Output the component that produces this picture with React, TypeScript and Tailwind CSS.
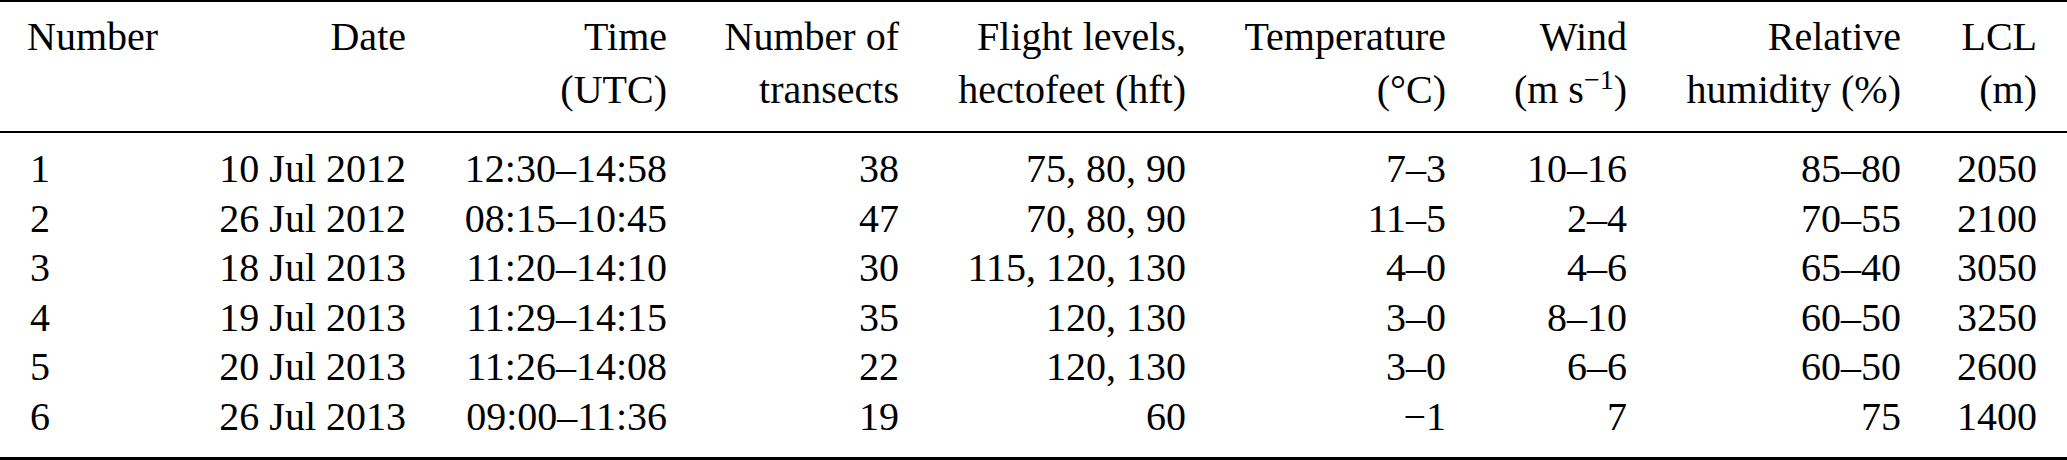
import React from "react";

type Flight = {
  num: string;
  date: string;
  time: string;
  transects: string;
  levels: string;
  temp: string;
  wind: string;
  rh: string;
  lcl: string;
};

const flights: Flight[] = [
  { num: "1", date: "10 Jul 2012", time: "12:30–14:58", transects: "38", levels: "75, 80, 90", temp: "7–3", wind: "10–16", rh: "85–80", lcl: "2050" },
  { num: "2", date: "26 Jul 2012", time: "08:15–10:45", transects: "47", levels: "70, 80, 90", temp: "11–5", wind: "2–4", rh: "70–55", lcl: "2100" },
  { num: "3", date: "18 Jul 2013", time: "11:20–14:10", transects: "30", levels: "115, 120, 130", temp: "4–0", wind: "4–6", rh: "65–40", lcl: "3050" },
  { num: "4", date: "19 Jul 2013", time: "11:29–14:15", transects: "35", levels: "120, 130", temp: "3–0", wind: "8–10", rh: "60–50", lcl: "3250" },
  { num: "5", date: "20 Jul 2013", time: "11:26–14:08", transects: "22", levels: "120, 130", temp: "3–0", wind: "6–6", rh: "60–50", lcl: "2600" },
  { num: "6", date: "26 Jul 2013", time: "09:00–11:36", transects: "19", levels: "60", temp: "−1", wind: "7", rh: "75", lcl: "1400" },
];

// column tracks, right edges line up with the reference
const cols =
  "grid grid-cols-[173px_206px_261px_232px_287px_260px_181px_274px_136px]";

const App = () => {
  return (
    <div className="w-full h-[460px] bg-white text-black text-[40px] font-['Liberation_Serif',serif] overflow-hidden">
      {/* the header */}
      <div
        className={`${cols} border-t-2 border-b-2 border-black pt-[8px] pb-[15px] pl-[27px] pr-[30px] leading-[53px] whitespace-nowrap`}
      >
        <div className="text-left">Number</div>
        <div className="text-right">Date</div>
        <div className="text-right">
          <div>Time</div>
          <div>(UTC)</div>
        </div>
        <div className="text-right">
          <div>Number of</div>
          <div>transects</div>
        </div>
        <div className="text-right">
          <div>Flight levels,</div>
          <div>hectofeet (hft)</div>
        </div>
        <div className="text-right">
          <div>Temperature</div>
          <div>(°C)</div>
        </div>
        <div className="text-right">
          <div>Wind</div>
          <div>
            (m&nbsp;s
            <span className="text-[28px] leading-none align-[14px]">−1</span>)
          </div>
        </div>
        <div className="text-right">
          <div>Relative</div>
          <div>humidity (%)</div>
        </div>
        <div className="text-right">
          <div>LCL</div>
          <div>(m)</div>
        </div>
      </div>

      {/* the rows */}
      <div className="border-b-[3px] border-black pt-[11px] pb-[15px] pl-[27px] pr-[30px] leading-[49.6px] whitespace-nowrap">
        {flights.map((f) => (
          <div key={f.num} className={cols}>
            <span className="text-left pl-[3px]">{f.num}</span>
            <span className="text-right">{f.date}</span>
            <span className="text-right">{f.time}</span>
            <span className="text-right">{f.transects}</span>
            <span className="text-right">{f.levels}</span>
            <span className="text-right">{f.temp}</span>
            <span className="text-right">{f.wind}</span>
            <span className="text-right">{f.rh}</span>
            <span className="text-right">{f.lcl}</span>
          </div>
        ))}
      </div>
    </div>
  );
};

export default App;
